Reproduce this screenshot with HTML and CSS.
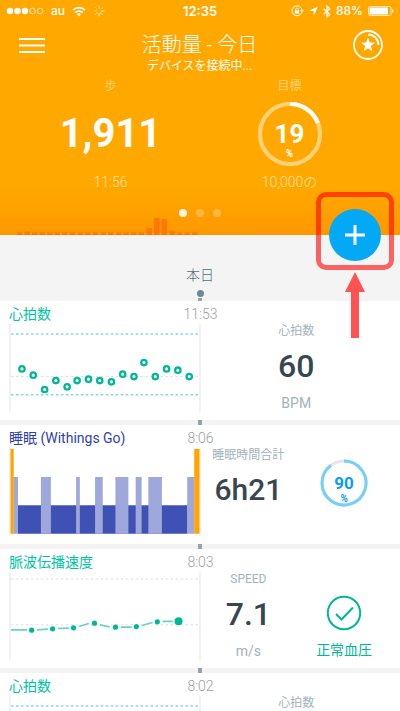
FILE: index.html
```html
<!DOCTYPE html>
<html lang="ja">
<head>
<meta charset="utf-8">
<meta name="viewport" content="width=device-width, initial-scale=1">
<title>活動量 - 今日</title>
<link rel="stylesheet" href="styles.css">
</head>
<body>
<div class="app">
  <header class="hero">
    <div class="status">
      <div class="status-side">
        <svg width="38" height="8" viewBox="0 0 38 8" fill="#fff" stroke="#fff" aria-hidden="true">
          <g stroke="none"><circle cx="4" cy="4" r="3.2"/><circle cx="11.5" cy="4" r="3.2"/><circle cx="19" cy="4" r="3.2"/></g>
          <g fill="none" stroke-width=".7"><circle cx="26.500" cy="4" r="2.8"/><circle cx="34" cy="4" r="2.8"/></g>
        </svg>
        <span class="carrier">au</span>
        <svg width="14" height="11" viewBox="0 0 14 11" fill="none" stroke="#fff" stroke-width="1.7" aria-hidden="true">
          <path d="M1 4.200a8.500 8.500 0 0 1 12 0M3.200 6.600a5.400 5.400 0 0 1 7.600 0"/><path d="M7 10.500 4.900 8.300a3 3 0 0 1 4.200 0z" fill="#fff" stroke="none"/>
        </svg>
        <svg width="12" height="12" viewBox="0 0 12 12" stroke="#fff" stroke-width="1" stroke-linecap="round" aria-hidden="true">
          <path d="M6 1v2.500" opacity=".5"/><path d="m9.500 2.500-1.700 1.700" opacity=".4"/><path d="M11 6H8.500" opacity=".9"/><path d="M9.500 9.500 7.800 7.800M6 11V8.500" opacity=".9"/><path d="m2.500 9.500 1.700-1.700" opacity=".7"/><path d="M1 6h2.500M2.500 2.500l1.700 1.700" opacity=".4"/>
        </svg>
      </div>
      <span class="clock">12:35</span>
      <div class="status-side status-right">
        <svg width="13" height="12" viewBox="0 0 13 12" aria-hidden="true">
          <path d="M10.700 7.500A5 5 0 1 1 11 5.500" fill="none" stroke="#fff"/><path d="M9.200 5h3.600L11 7.600z" fill="#fff"/><path d="M3.800 5.400h4.400v3.200H3.800z" fill="#fff"/><path d="M4.700 5.500V4.300a1.300 1.300 0 0 1 2.600 0v1.200" fill="none" stroke="#fff" stroke-width=".8"/>
        </svg>
        <svg width="9" height="10" viewBox="0 0 9 10" fill="#fff" aria-hidden="true"><path d="M9 .5 5 9.500 4.600 5 0 4.800z"/></svg>
        <svg width="8" height="13" viewBox="0 0 8 13" fill="none" stroke="#fff" stroke-width="1.200" aria-hidden="true"><path d="m.6 3.700 6.200 5.500L4 12V1l2.800 2.800L.6 9.300"/></svg>
        <span class="battery-text">88%</span>
        <svg width="26" height="10" viewBox="0 0 26 10" aria-hidden="true"><rect x=".5" y=".5" width="22.500" height="9" rx="1.500" fill="none" stroke="#fff" stroke-width=".7"/><rect x="1.500" y="1.500" width="18.500" height="7" rx=".5" fill="#fff"/><path d="M24 3.200q1.600.4 1.600 1.800T24 6.800z" fill="#fff"/></svg>
      </div>
    </div>

    <div class="nav">
      <button class="icon-button" aria-label="メニュー">
        <svg width="28" height="18" viewBox="0 0 28 18" stroke="#fff" stroke-width="2" aria-hidden="true"><path d="M1 3h26M1 9.500h26M1 16h26"/></svg>
      </button>
      <div class="heading">
        <h1>活動量 - 今日</h1>
        <p>デバイスを接続中...</p>
      </div>
      <button class="icon-button" aria-label="バッジ">
        <svg width="30" height="30" viewBox="0 0 30 30" aria-hidden="true"><circle cx="15" cy="15" r="14" fill="none" stroke="#fff" stroke-width="1.800"/><path d="M15 4.500A10.500 10.500 0 0 1 25.500 15" fill="none" stroke="#fff" stroke-width="1.800"/><path d="m15 7.500 1.800 5.100 5.200.1-4.200 3.300 1.500 5.300-4.300-3.100-4.300 3.100 1.500-5.300L8 12.700l5.200-.1z" fill="#fff"/></svg>
      </button>
    </div>

    <div class="totals">
      <div class="total">
        <span class="total-label">歩</span>
        <strong class="steps">1,911</strong>
        <span class="total-note">11:56</span>
      </div>
      <div class="total">
        <span class="total-label">目標</span>
        <div class="ring goal-ring">
          <svg viewBox="0 0 64 64" fill="none" stroke-width="4.200" aria-hidden="true"><circle cx="32" cy="32" r="30" stroke="#ffd27a"/><path d="M32 2a30 30 0 0 1 27.900 19" stroke="#fff"/></svg>
          <strong>19</strong><small>%</small>
        </div>
        <span class="total-note">10,000の</span>
      </div>
    </div>

    <div class="pager"><span class="current"></span><span></span><span></span></div>
    <svg class="steps-bars" viewBox="0 0 400 18" fill="#ff7600" aria-hidden="true">
      <path d="M17 15.500h5.500V18H17zM24.500 14.500H30V18h-5.500zM32 15.500h5.500V18H32zM39.500 15.500H45V18h-5.500zM47 15.500h5.500V18H47zM54.500 15.500H60V18h-5.500zM62 15.500h5.500V18H62zM69.500 15.500H75V18h-5.500zM77.500 15.500H83V18h-5.500zM85 15.500h5.500V18H85zM92.500 15.500H98V18h-5.500zM100.500 15.500h5.500V18h-5.500zM108 15.500h5.500V18H108zM116 15.500h5.500V18H116zM123.500 15.500h5.500V18h-5.500zM131 15.500h5.500V18H131zM138.500 15.500h5.500V18h-5.500zM146.500 11h5.500v7h-5.500zM154 1h5.500v17H154zM161.500 2h5.500v16h-5.500zM169.500 14h5.500v4h-5.500zM177 15.500h5.500V18H177zM184.500 15.500h5.500V18h-5.500zM192 15.500h5.500V18H192z"/>
    </svg>

    <div class="callout">
      <div class="callout-box">
        <button class="add" aria-label="追加">
          <svg width="20" height="20" viewBox="0 0 20 20" stroke="#fff" stroke-width="3" aria-hidden="true"><path d="M10 0v20M0 10h20"/></svg>
        </button>
      </div>
      <svg class="callout-arrow" width="20" height="66" viewBox="0 0 20 66" aria-hidden="true"><path d="m10 0 10 20h-6v46H6V20H0z"/></svg>
    </div>
  </header>

  <main>
    <div class="day">
      <h2>本日</h2>
      <span class="day-dot"></span>
      <span class="day-stem"></span>
    </div>

    <section class="card green">
      <div class="card-head"><h3>心拍数</h3><time>11:53</time></div>
      <div class="card-body">
        <svg class="chart" viewBox="0 0 192 88" fill="none" aria-hidden="true">
          <path d="M1 0v88M191.500 0v88" stroke="#e0e4e7"/>
          <path d="M2 52.500h189" stroke="#d8dde0" stroke-dasharray="2.500 2.500"/>
          <path d="M2 10h189M2 71h189" stroke="#81d4fa" stroke-width="1.500" stroke-dasharray="2.500 2.500"/>
          <g stroke="#00b894" stroke-width="2.300" fill="#fff"><circle cx="13" cy="45" r="2.700"/><circle cx="24.300" cy="51.300" r="2.700"/><circle cx="35.700" cy="65.700" r="2.700"/><circle cx="47" cy="56.700" r="2.700"/><circle cx="58.300" cy="63" r="2.700"/><circle cx="68.300" cy="56.700" r="2.700"/><circle cx="79.700" cy="55.300" r="2.700"/><circle cx="91" cy="56.700" r="2.700"/><circle cx="102.700" cy="58" r="2.700"/><circle cx="114" cy="50.300" r="2.700"/><circle cx="125.300" cy="52.700" r="2.700"/><circle cx="135.300" cy="38.700" r="2.700"/><circle cx="146.700" cy="52.700" r="2.700"/><circle cx="158" cy="45" r="2.700"/><circle cx="169.300" cy="46.300" r="2.700"/><circle cx="180.700" cy="52.700" r="2.700"/></g>
        </svg>
        <div class="metrics">
          <div class="metric"><span class="metric-label">心拍数</span><strong>60</strong><span class="unit">BPM</span></div>
        </div>
      </div>
    </section>

    <div class="link"></div>
    <section class="card indigo">
      <div class="card-head"><h3>睡眠 (Withings Go)</h3><time>8:06</time></div>
      <div class="card-body">
        <svg class="chart" viewBox="0 0 192 88" aria-hidden="true">
          <path d="M1 0v88M191.500 0v88" stroke="#e0e4e7"/>
          <path d="M9 57.500h170V86H9z" fill="#3f51b5"/>
          <path d="M4.500 29H9v57H4.500zM32 29h10v57H32zM67.300 29H71v57h-3.700zM86.300 29H94v57h-7.700zM106.700 29h13v57h-13zM127 29h6v57h-6zM139.700 29h13.600v57h-13.600zM178.700 29h7v57h-7z" fill="#9fa8da"/>
          <path d="M1.500 1h3.200v85H1.500zM185.700 1h5.300v85h-5.300z" fill="#ffa500"/>
        </svg>
        <div class="metrics">
          <div class="metric"><span class="metric-label">睡眠時間合計</span><strong class="duration">6h21</strong></div>
          <div class="score">
            <div class="ring sleep-ring">
              <svg viewBox="0 0 48 48" fill="none" stroke-width="3" aria-hidden="true"><circle cx="24" cy="24" r="22" stroke="#e6e6e6"/><path d="M24 2A22 22 0 1 1 11.100 6.200" stroke="#74d0fb"/></svg>
              <strong>90</strong><small>%</small>
            </div>
          </div>
        </div>
      </div>
    </section>

    <div class="link"></div>
    <section class="card green">
      <div class="card-head"><h3>脈波伝播速度</h3><time>8:03</time></div>
      <div class="card-body">
        <svg class="chart" viewBox="0 0 192 88" fill="none" aria-hidden="true">
          <path d="M1 0v88M191.500 0v88" stroke="#e0e4e7"/>
          <path d="M2 7h189M2 53h189" stroke="#d8dde0" stroke-dasharray="2.500 2.500"/>
          <path d="M2 58h16M28 58l11-.7M49 56.700l11-.4M70 54.700l10-3M91 53l10 2M112 55.300h11M133 53.700l11-3M154 49.500h10" stroke="#fff" stroke-width="4"/>
          <path d="M2 58h16M28 58l11-.7M49 56.700l11-.4M70 54.700l10-3M91 53l10 2M112 55.300h11M133 53.700l11-3M154 49.500h10" stroke="#66d4bf" stroke-width="1.600"/>
          <g fill="#00b894"><circle cx="22.700" cy="58.300" r="2.600"/><circle cx="43.700" cy="57" r="2.600"/><circle cx="64.700" cy="56" r="2.600"/><circle cx="85.700" cy="51.300" r="2.600"/><circle cx="106.700" cy="55.300" r="2.600"/><circle cx="127.700" cy="54.700" r="2.600"/><circle cx="148.700" cy="50" r="2.600"/><circle cx="170" cy="49.300" r="4"/></g>
        </svg>
        <div class="metrics">
          <div class="metric"><span class="metric-label">SPEED</span><strong>7.1</strong><span class="unit">m/s</span></div>
          <div class="verdict">
            <svg width="36" height="36" viewBox="0 0 36 36" fill="none" stroke="#00b894" stroke-width="2" aria-hidden="true"><circle cx="18" cy="18" r="16.200"/><path d="m10 19 5.500 5.500L27 12.500"/></svg>
            <span>正常血圧</span>
          </div>
        </div>
      </div>
    </section>

    <div class="link"></div>
    <section class="card green">
      <div class="card-head"><h3>心拍数</h3><time>8:02</time></div>
      <div class="card-body">
        <svg class="chart" viewBox="0 0 192 88" fill="none" aria-hidden="true">
          <path d="M1 0v88M191.500 0v88" stroke="#e0e4e7"/>
          <path d="M2 10h189M2 71h189" stroke="#81d4fa" stroke-width="1.500" stroke-dasharray="2.500 2.500"/>
        </svg>
        <div class="metrics">
          <div class="metric"><span class="metric-label">心拍数</span></div>
        </div>
      </div>
    </section>
  </main>
</div>
</body>
</html>
```
FILE: styles.css
```css
* {
  box-sizing: border-box;
}

body {
  margin: 0;
  font-family: Roboto, "Noto Sans CJK JP", sans-serif;
  background: #f4f4f4;
}

h1, h2, h3, p {
  margin: 0;
}

button {
  border: 0;
  padding: 0;
  background: none;
  cursor: pointer;
}

svg {
  display: block;
  flex: none;
}

.app {
  height: 100vh;
  overflow: hidden;
}

/* Header */
.hero {
  position: relative;
  color: #fff;
  background: linear-gradient(#ffa800 0, #ffa800 80%, #ff9800 100%);
}

.status {
  display: grid;
  grid-template-columns: 1fr auto 1fr;
  align-items: center;
  height: 22px;
  padding: 0 6px;
}

.status-side {
  display: flex;
  align-items: center;
  gap: 7px;
}

.status-right {
  justify-content: flex-end;
  gap: 5px;
}

.carrier,
.battery-text {
  font: 500 12px/14px Inter, sans-serif;
}

.clock {
  font: 600 13px/14px Inter, sans-serif;
}

.nav {
  display: flex;
  justify-content: space-between;
  align-items: flex-start;
  height: 56px;
  padding: 8px 17px 0 18px;
}

.icon-button {
  display: flex;
  align-items: center;
  height: 30px;
}

.heading {
  display: flex;
  flex-direction: column;
  align-items: center;
  padding-top: 1px;
}

h1 {
  font-size: 20px;
  line-height: 28px;
  font-weight: 300;
}

.heading p {
  font-size: 12px;
  line-height: 14px;
}

.totals {
  display: grid;
  grid-template-columns: 1fr 1fr;
  padding: 0 21px;
}

.total {
  display: grid;
  grid-template-rows: 16px 80px 16px;
  place-items: center;
}

.total-label,
.total-note {
  font-weight: 300;
  color: #ffe0a3;
}

.total-label {
  font-size: 12px;
  line-height: 16px;
}

.total-note {
  font-size: 14px;
  line-height: 16px;
}

.steps {
  font-size: 40px;
  line-height: 48px;
}

.ring {
  position: relative;
  display: flex;
  flex-direction: column;
  align-items: center;
}

.ring svg {
  position: absolute;
  inset: 0;
}

.ring small {
  font-size: 10px;
  line-height: 12px;
  font-weight: 700;
}

.goal-ring {
  width: 64px;
  height: 64px;
  padding-top: 18px;
}

.goal-ring strong {
  font-size: 26px;
  line-height: 28px;
}

.pager {
  display: flex;
  justify-content: center;
  align-items: center;
  gap: 9px;
  height: 8px;
  margin-top: 19px;
}

.pager span {
  width: 8px;
  height: 8px;
  border-radius: 50%;
  background: #ffb73f;
}

.pager .current {
  background: #fff3e0;
}

.steps-bars {
  width: 100%;
}

/* Highlight over the add button */
.callout {
  position: absolute;
  top: 192px;
  right: 6px;
  z-index: 1;
  display: flex;
  flex-direction: column;
  align-items: center;
  gap: 2px;
}

.callout-box {
  display: grid;
  place-items: center;
  padding: 12px 8px 4px;
  border: 5px solid rgba(255, 0, 0, 0.6);
  border-radius: 10px;
}

.add {
  display: grid;
  place-items: center;
  width: 52px;
  height: 52px;
  border-radius: 50%;
  background: #03a9f4;
}

.callout-arrow {
  fill: #ff5353;
}

/* Timeline */
.day {
  display: flex;
  flex-direction: column;
  align-items: center;
  padding-top: 30px;
}

h2 {
  font-size: 14px;
  line-height: 20px;
  font-weight: 300;
  color: #4f6d7b;
}

.day-dot {
  width: 7px;
  height: 7px;
  margin: 5px 0 1px;
  border-radius: 50%;
  background: #6a8a9a;
}

.day-stem {
  width: 4px;
  height: 3px;
  background: #90a4ae;
}

.link {
  display: flex;
  justify-content: center;
  background: #f3f3f3;
}

.link::before {
  content: "";
  width: 4px;
  height: 5px;
  background: #90a4ae;
}

.card {
  background: #fff;
  padding: 2px 8px 8px 9px;
}

.card-head {
  display: grid;
  grid-template-columns: 1fr auto 1fr;
  height: 21px;
  align-items: center;
}

h3 {
  font-size: 14px;
  line-height: 20px;
  font-weight: 400;
  white-space: nowrap;
}

time {
  font-size: 14px;
  line-height: 20px;
  font-weight: 300;
  color: #9e9e9e;
}

.green h3 {
  color: #00c4a0;
}

.indigo h3 {
  color: #303fb0;
}

.card-body {
  display: grid;
  grid-template-columns: 1fr 1fr;
}

.chart {
  width: 100%;
}

.metrics {
  display: grid;
  grid-auto-flow: column;
  grid-auto-columns: 1fr;
}

.metric {
  display: grid;
  grid-template-rows: 14px 56px 18px;
  align-content: start;
  place-items: center;
  color: #37474f;
  white-space: nowrap;
}

.metric-label {
  font-size: 12px;
  line-height: 14px;
  color: #a3b3bb;
}

.metric strong {
  font-size: 32px;
  line-height: 36px;
  font-weight: 500;
}

.metric .duration {
  font-size: 30px;
}

.unit {
  font-size: 14px;
  line-height: 18px;
  color: #a3b3bb;
}

.score {
  display: grid;
  justify-content: center;
  align-content: start;
  padding-top: 11px;
}

.sleep-ring {
  width: 48px;
  height: 48px;
  padding-top: 14px;
  color: #0a9df0;
}

.sleep-ring strong {
  font-size: 17px;
  line-height: 20px;
}

.verdict {
  display: flex;
  flex-direction: column;
  align-items: center;
  gap: 10px;
  padding-top: 23px;
  font-size: 14px;
  line-height: 18px;
  color: #00b894;
}
```
